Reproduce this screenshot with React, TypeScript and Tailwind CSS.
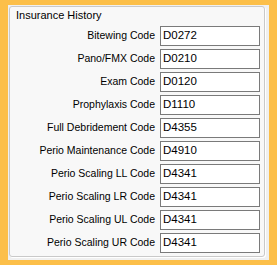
const rows = [
  ["Bitewing Code", "D0272"],
  ["Pano/FMX Code", "D0210"],
  ["Exam Code", "D0120"],
  ["Prophylaxis Code", "D1110"],
  ["Full Debridement Code", "D4355"],
  ["Perio Maintenance Code", "D4910"],
  ["Perio Scaling LL Code", "D4341"],
  ["Perio Scaling LR Code", "D4341"],
  ["Perio Scaling UL Code", "D4341"],
  ["Perio Scaling UR Code", "D4341"],
];

export default function App() {
  return (
    <div
      className="w-[277px] h-[265px] bg-[#fcbf49] pl-[8px] pr-[8px] pt-[5px] pb-[5px]"
      style={{ fontFamily: '"Liberation Sans", Arial, sans-serif' }}
    >
      <div className="h-full bg-[#f0f0f0] pl-[1px] pt-[1px] pr-[4px] pb-[3px]">
        <div className="h-full rounded-[3px] border border-[#c9c9c9] bg-[#f8f8f8] shadow-[1px_1px_0_#ffffff] pl-[6px] pr-[4px] pt-[1px]">
          <div className="text-[11px] leading-[13px] text-black pt-[1px]">Insurance History</div>
          <div className="mt-[4px] grid grid-cols-[1fr_100px] gap-x-[5px] gap-y-[3px]">
            {rows.map(([label, code], i) => (
              <div key={i} className="contents">
                <div className="h-[20px] flex items-center justify-end text-[10.5px] text-black whitespace-nowrap">
                  {label}
                </div>
                <div className="h-[20px] border border-[#7a7a7a] bg-white flex items-center pl-[2px] text-[11.5px] text-black">
                  {code}
                </div>
              </div>
            ))}
          </div>
        </div>
      </div>
    </div>
  );
}
